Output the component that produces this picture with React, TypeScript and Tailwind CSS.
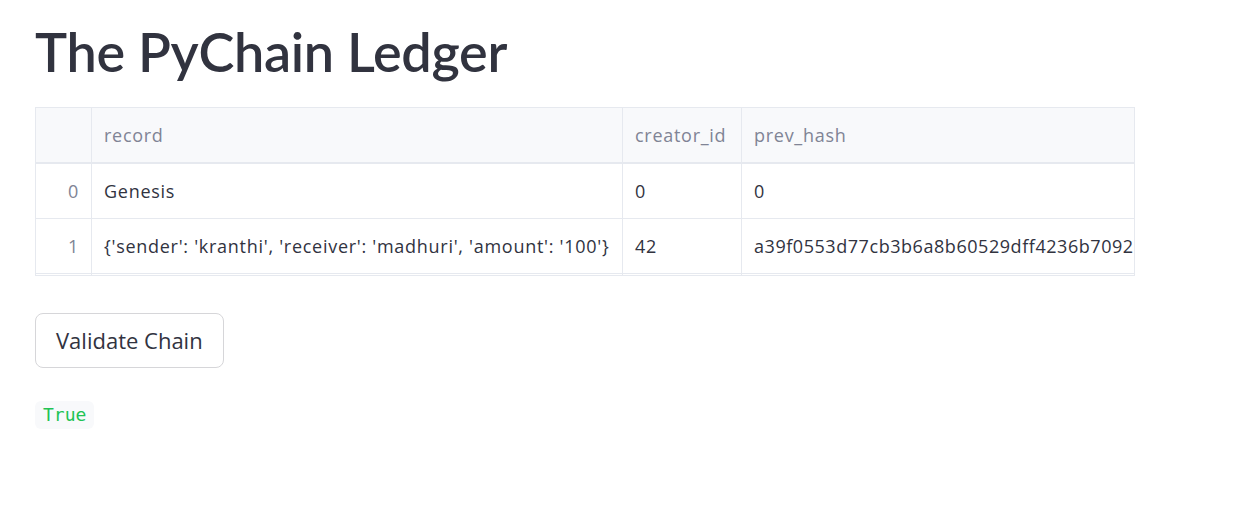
import React from "react";

const rows = [
  { idx: "0", record: "Genesis", creator: "0", prev: "0" },
  {
    idx: "1",
    record: "{'sender': 'kranthi', 'receiver': 'madhuri', 'amount': '100'}",
    creator: "42",
    prev: "a39f0553d77cb3b6a8b60529dff4236b7092",
  },
];

const cell = "shrink-0 border-r border-[#e6e9ef] px-3 flex items-center whitespace-nowrap overflow-hidden";

export default function App() {
  return (
    <div className="min-h-screen bg-white px-[35px] text-[#31333f] font-['Lato','Open_Sans',sans-serif]">
      <h1 className="pt-[17px] text-[54px] font-semibold leading-[70px] tracking-[-0.3px]">
        The PyChain Ledger
      </h1>

      <div className="mt-[20px] h-[169px] w-[1100px] overflow-hidden border border-[#e6e9ef] font-['Open_Sans',sans-serif] text-[18px] tracking-[0.72px]">
        <div className="flex h-[56px] border-b-2 border-[#e6e9ef] bg-[#f8f9fb] text-[#808495]">
          <div className="w-[56px] shrink-0 border-r border-[#e6e9ef]" />
          <div className={cell + " w-[531px]"}>record</div>
          <div className={cell + " w-[119px]"}>creator_id</div>
          <div className={cell + " w-[500px]"}>prev_hash</div>
        </div>
        {rows.map((r) => (
          <div key={r.idx} className="flex h-[55px] border-b border-[#e6e9ef]">
            <div className={cell + " w-[56px] justify-end text-[#808495]"}>{r.idx}</div>
            <div className={cell + " w-[531px]"}>{r.record}</div>
            <div className={cell + " w-[119px]"}>{r.creator}</div>
            <div className={cell + " w-[500px] tracking-[0.55px]"}>{r.prev}</div>
          </div>
        ))}
        <div className="flex h-[10px]">
          <div className="w-[56px] shrink-0 border-r border-[#e6e9ef]" />
          <div className="w-[531px] shrink-0 border-r border-[#e6e9ef]" />
          <div className="w-[119px] shrink-0 border-r border-[#e6e9ef]" />
        </div>
      </div>

      <button className="mt-[37px] flex h-[55px] items-center rounded-[8px] border border-[#d6d6d9] bg-white px-[20px] font-['Open_Sans',sans-serif] text-[22px] text-[#31333f]">
        Validate Chain
      </button>

      <div className="mt-[33px]">
        <code className="inline-block rounded-[6px] bg-[#f8f9fb] px-[8px] py-[3px] text-[18px] leading-[22px] text-[#21c354] font-['DejaVu_Sans_Mono',monospace]">
          True
        </code>
      </div>
    </div>
  );
}
